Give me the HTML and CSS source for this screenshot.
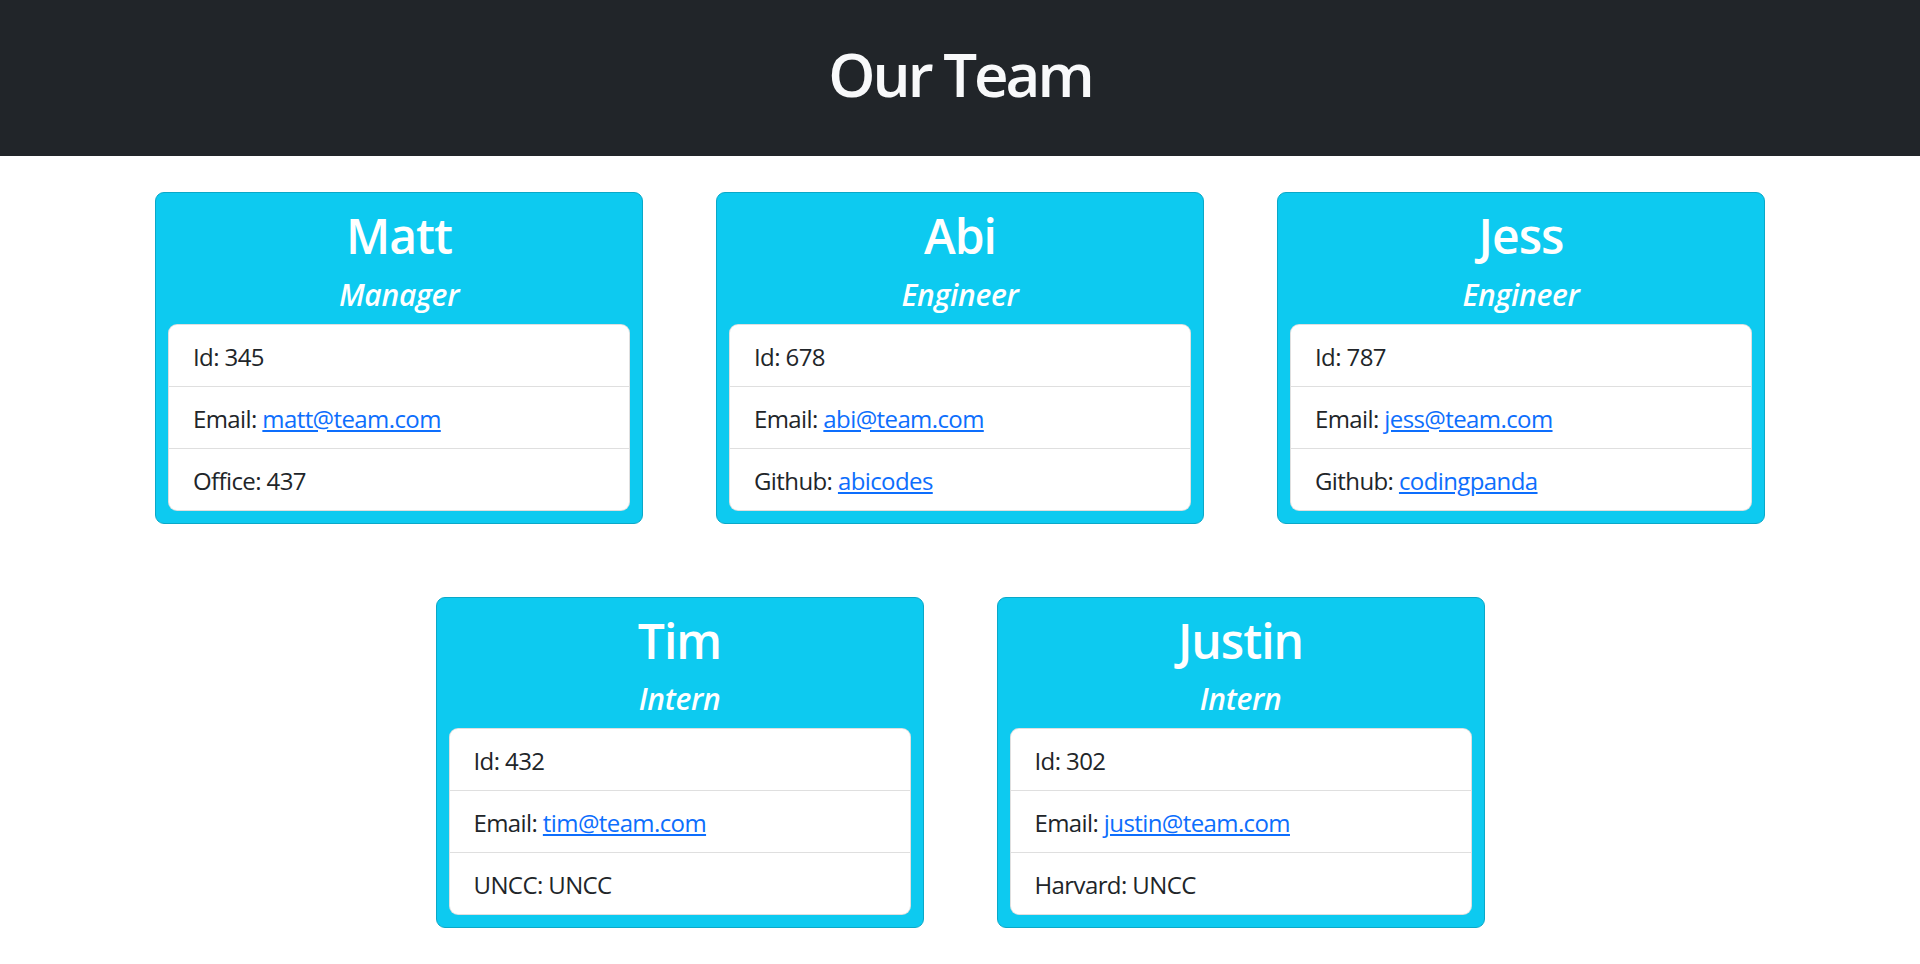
FILE: index.html
```html
<!DOCTYPE html>
<html lang="en">
<head>
<meta charset="UTF-8">
<title>Our Team</title>
<link rel="stylesheet" href="styles.css">
</head>
<body>
<header class="banner">
  <h1 class="banner-title">Our Team</h1>
</header>
<main class="team">
  <div class="card">
    <h2 class="card-name">Matt</h2>
    <h5 class="card-role">Manager</h5>
    <ul class="info">
      <li class="info-item">Id: 345</li>
      <li class="info-item">Email: <a href="#">matt@team.com</a></li>
      <li class="info-item">Office: 437</li>
    </ul>
  </div>
  <div class="card">
    <h2 class="card-name">Abi</h2>
    <h5 class="card-role">Engineer</h5>
    <ul class="info">
      <li class="info-item">Id: 678</li>
      <li class="info-item">Email: <a href="#">abi@team.com</a></li>
      <li class="info-item">Github: <a href="#">abicodes</a></li>
    </ul>
  </div>
  <div class="card">
    <h2 class="card-name">Jess</h2>
    <h5 class="card-role">Engineer</h5>
    <ul class="info">
      <li class="info-item">Id: 787</li>
      <li class="info-item">Email: <a href="#">jess@team.com</a></li>
      <li class="info-item">Github: <a href="#">codingpanda</a></li>
    </ul>
  </div>
  <div class="card">
    <h2 class="card-name">Tim</h2>
    <h5 class="card-role">Intern</h5>
    <ul class="info">
      <li class="info-item">Id: 432</li>
      <li class="info-item">Email: <a href="#">tim@team.com</a></li>
      <li class="info-item">UNCC: UNCC</li>
    </ul>
  </div>
  <div class="card">
    <h2 class="card-name">Justin</h2>
    <h5 class="card-role">Intern</h5>
    <ul class="info">
      <li class="info-item">Id: 302</li>
      <li class="info-item">Email: <a href="#">justin@team.com</a></li>
      <li class="info-item">Harvard: UNCC</li>
    </ul>
  </div>
</main>
</body>
</html>
```
FILE: styles.css
```css
* { box-sizing: border-box; }
html, body { margin: 0; padding: 0; }
body {
  font-family: "Open Sans", "Noto Sans", sans-serif;
  color: #212529;
  background: #fff;
  font-size: 24px;
  line-height: 1.5;
}
.banner {
  background: #212529;
  height: 156px;
  padding-top: 38px;
  text-align: center;
}
.banner-title {
  margin: 0;
  color: #f8f9fa;
  font-size: 60px;
  font-weight: 600;
  letter-spacing: -3px;
  line-height: 1.2;
}
.team {
  display: flex;
  flex-wrap: wrap;
  justify-content: center;
  column-gap: 73px;
  row-gap: 73px;
  max-width: 1620px;
  margin: 36px auto 0;
}
.card {
  width: 488px;
  background: #0dcaf0;
  border: 1px solid #0aa8c8;
  border-radius: 9px;
  padding: 14px 12px 12px;
  text-align: center;
  color: #fff;
}
.card-name {
  margin: 0 0 12px;
  font-size: 48px;
  font-weight: 600;
  letter-spacing: -1px;
  line-height: 1.2;
}
.card-role {
  margin: 0 0 11px;
  font-size: 30px;
  font-weight: 600;
  font-style: italic;
  letter-spacing: -0.3px;
  line-height: 1.2;
}
.info {
  list-style: none;
  margin: 0;
  padding: 0;
  background: #fff;
  border: 1px solid rgba(0,0,0,0.125);
  border-radius: 9px;
  text-align: left;
  color: #212529;
}
.info-item {
  padding: 14px 24px 11px;
  line-height: 36px;
  letter-spacing: -0.6px;
}
.info-item + .info-item {
  border-top: 1px solid rgba(0,0,0,0.125);
}
.info-item a {
  color: #0d6efd;
  text-decoration: underline;
}
```
